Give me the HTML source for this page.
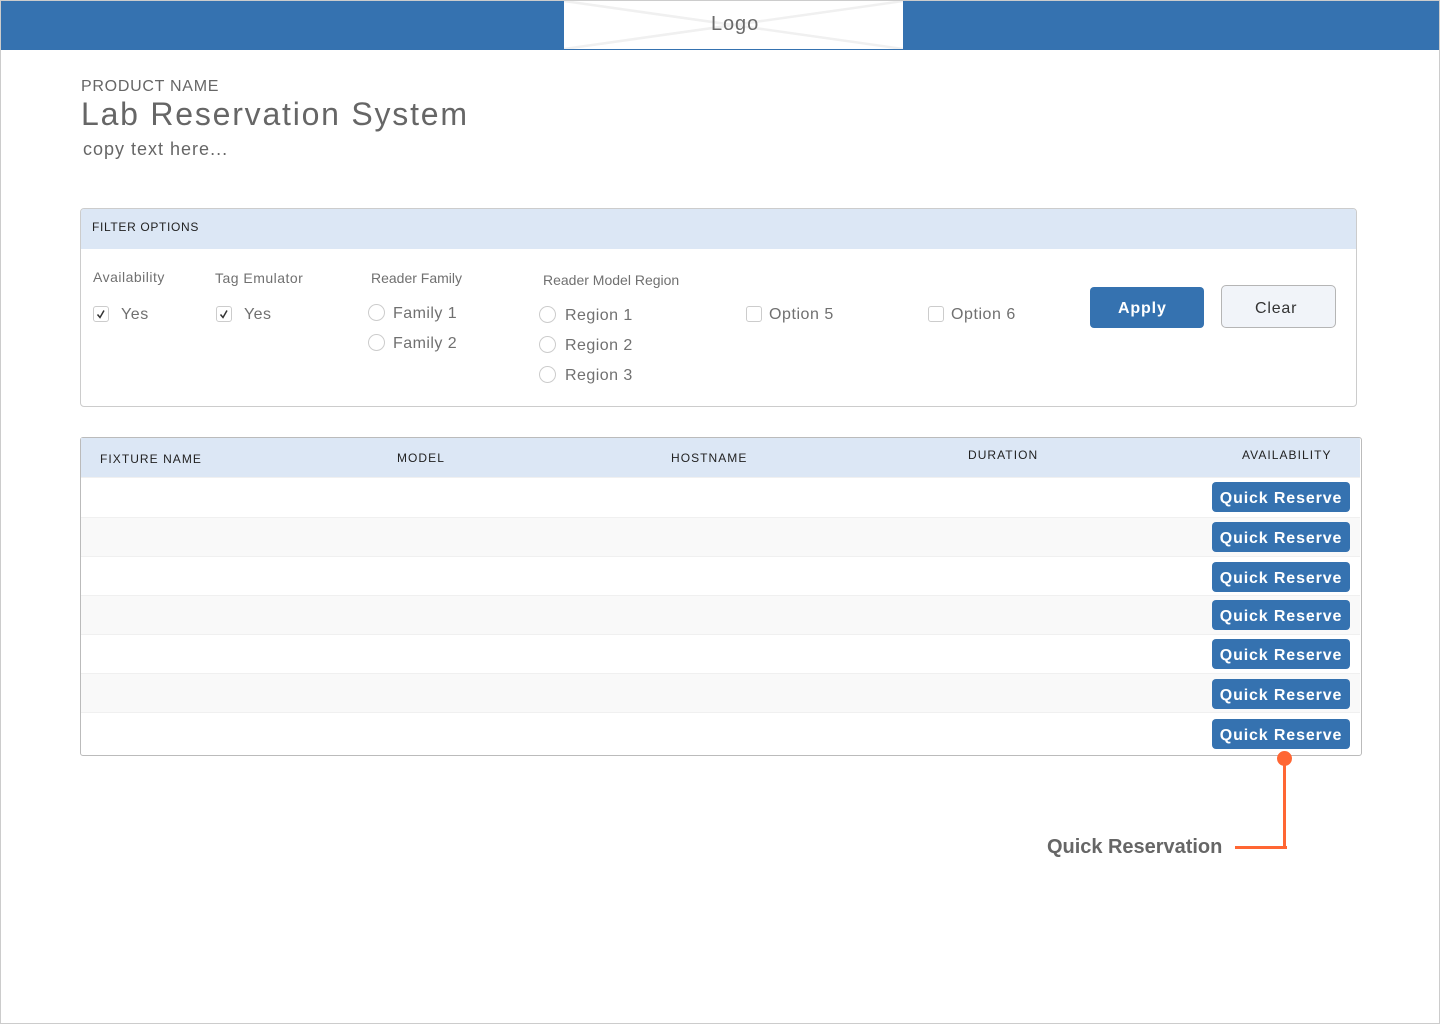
<!DOCTYPE html>
<html>
<head>
<meta charset="utf-8">
<style>
html,body{margin:0;padding:0;background:#fff}
#p{position:relative;width:1440px;height:1024px;overflow:hidden;background:#fff;font-family:"Liberation Sans",Arial,sans-serif;box-sizing:border-box}
#p div,#p span.t{position:absolute;white-space:nowrap;box-sizing:border-box}
.t{position:absolute;white-space:nowrap;line-height:1}
.lbl{font-size:14px;color:#707070;letter-spacing:.48px}
.opt{font-size:16px;color:#707070;letter-spacing:.46px}
.th{font-size:12px;color:#222;letter-spacing:1.05px}
.cb{width:16px;height:16px;border:1px solid #ccc;border-radius:3px;background:#fff}
.r{width:17px;height:17px;border:1px solid #ccc;border-radius:50%;background:#fff}
.qr{left:1212px;width:138px;height:30px;background:#3572b0;border-radius:4px;color:#fff;font-weight:bold;font-size:16px;letter-spacing:.87px;line-height:33px;text-align:center}
.row{left:81px;width:1279px;height:39px;border-bottom:1px solid #f0f0f0}
</style>
</head>
<body>
<div id="p">
<div style="left:0;top:0;width:1440px;height:1024px;border:1px solid #ccc"></div>
<div style="left:1px;top:1px;width:1438px;height:49px;background:#3572b0"></div>
<div style="left:564px;top:1px;width:339px;height:48px;background:#fff;overflow:hidden">
<svg width="339" height="48" style="position:absolute;left:0;top:0"><path d="M0 0L339 48M339 0L0 48" stroke="#f0f0f0" stroke-width="2.5" fill="none"/></svg>
</div>
<span class="t" style="left:711px;top:14px;font-size:20px;color:#6b6b6b;letter-spacing:.9px;background:none">Logo</span>

<span class="t" style="left:81px;top:79px;font-size:16px;color:#666;letter-spacing:.72px">PRODUCT NAME</span>
<span class="t" style="left:81px;top:98px;font-size:32px;color:#666;letter-spacing:1.78px">Lab Reservation System</span>
<span class="t" style="left:83px;top:140px;font-size:18px;color:#666;letter-spacing:1px">copy text here...</span>

<div style="left:80px;top:208px;width:1277px;height:199px;border:1px solid #ccc;border-radius:4px;background:#fff"></div>
<div style="left:81px;top:209px;width:1275px;height:40px;background:#dce7f5;border-radius:3px 3px 0 0"></div>
<span class="t" style="left:92px;top:221px;font-size:12px;color:#222;letter-spacing:.66px">FILTER OPTIONS</span>

<span class="t lbl" style="left:93px;top:270px;letter-spacing:.5px">Availability</span>
<span class="t lbl" style="left:215px;top:271px">Tag Emulator</span>
<span class="t lbl" style="left:371px;top:271px;letter-spacing:0">Reader Family</span>
<span class="t lbl" style="left:543px;top:273px;letter-spacing:0">Reader Model Region</span>

<div class="cb" style="left:93px;top:306px"><svg width="14" height="14" style="position:absolute;left:0;top:0"><path d="M3.5 7.5L6 10.5L10 3.5" stroke="#333" stroke-width="1.5" fill="none"/></svg></div>
<span class="t opt" style="left:121px;top:307px;letter-spacing:.55px">Yes</span>
<div class="cb" style="left:216px;top:306px"><svg width="14" height="14" style="position:absolute;left:0;top:0"><path d="M3.5 7.5L6 10.5L10 3.5" stroke="#333" stroke-width="1.5" fill="none"/></svg></div>
<span class="t opt" style="left:244px;top:307px;letter-spacing:.45px">Yes</span>

<div class="r" style="left:368px;top:304px"></div>
<span class="t opt" style="left:393px;top:306px">Family 1</span>
<div class="r" style="left:368px;top:334px"></div>
<span class="t opt" style="left:393px;top:336px">Family 2</span>

<div class="r" style="left:539px;top:306px"></div>
<span class="t opt" style="left:565px;top:308px">Region 1</span>
<div class="r" style="left:539px;top:336px"></div>
<span class="t opt" style="left:565px;top:338px">Region 2</span>
<div class="r" style="left:539px;top:366px"></div>
<span class="t opt" style="left:565px;top:368px">Region 3</span>

<div class="cb" style="left:746px;top:306px"></div>
<span class="t opt" style="left:769px;top:307px;letter-spacing:.55px">Option 5</span>
<div class="cb" style="left:928px;top:306px"></div>
<span class="t opt" style="left:951px;top:307px;letter-spacing:.55px">Option 6</span>

<div style="left:1090px;top:287px;width:114px;height:41px;background:#3572b0;border-radius:4px;color:#fff;font-weight:bold;font-size:16px;letter-spacing:.85px;line-height:43px;padding-left:28px">Apply</div>
<div style="left:1221px;top:285px;width:115px;height:43px;background:#f1f4f9;border:1px solid #b5b5b5;border-radius:5px;color:#333;font-size:16px;letter-spacing:.8px;line-height:46px;padding-left:33px">Clear</div>

<div style="left:80px;top:437px;width:1282px;height:319px;border:1px solid #bbb;border-radius:3px;background:#fff"></div>
<div style="left:81px;top:438px;width:1279px;height:39px;background:#dce7f5"></div>
<div style="left:81px;top:477px;width:1279px;height:1px;background:#f0f0f0"></div>
<div class="row" style="top:478px;height:40px;background:#fff"></div>
<div class="row" style="top:518px;background:#f9f9f9"></div>
<div class="row" style="top:557px;background:#fff"></div>
<div class="row" style="top:596px;background:#f9f9f9"></div>
<div class="row" style="top:635px;background:#fff"></div>
<div class="row" style="top:674px;background:#f9f9f9"></div>

<span class="t th" style="left:100px;top:453px">FIXTURE NAME</span>
<span class="t th" style="left:397px;top:452px">MODEL</span>
<span class="t th" style="left:671px;top:452px">HOSTNAME</span>
<span class="t th" style="left:968px;top:449px">DURATION</span>
<span class="t th" style="left:1242px;top:449px">AVAILABILITY</span>

<div class="qr" style="top:482px">Quick Reserve</div>
<div class="qr" style="top:522px">Quick Reserve</div>
<div class="qr" style="top:562px">Quick Reserve</div>
<div class="qr" style="top:600px">Quick Reserve</div>
<div class="qr" style="top:639px">Quick Reserve</div>
<div class="qr" style="top:679px">Quick Reserve</div>
<div class="qr" style="top:719px">Quick Reserve</div>

<div style="left:1277px;top:751px;width:15px;height:15px;border-radius:50%;background:#ff6633"></div>
<div style="left:1283px;top:760px;width:3px;height:89px;background:#ff6633"></div>
<div style="left:1235px;top:846px;width:52px;height:3px;background:#ff6633"></div>
<span class="t" style="left:1047px;top:837px;font-size:20px;font-weight:bold;color:#666;letter-spacing:-.02px">Quick Reservation</span>
</div>
</body>
</html>
